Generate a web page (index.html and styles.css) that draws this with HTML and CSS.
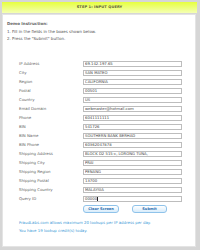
FILE: index.html
```html
<!DOCTYPE html>
<html>
<head>
<meta charset="utf-8">
<link rel="stylesheet" href="styles.css">
</head>
<body>
<div class="frame">
  <div class="header">STEP 1: INPUT QUERY</div>
  <div class="panel">
    <div class="instr">
      <div class="instr-title">Demo Instruction:</div>
      <div>1. Fill in the fields in the boxes shown below.</div>
      <div>2. Press the "Submit" button.</div>
    </div>
    <form class="form">
      <div class="row"><label>IP Address</label><input value="69.142.197.65"></div>
      <div class="row"><label>City</label><input value="SAN MATEO"></div>
      <div class="row"><label>Region</label><input value="CALIFORNIA"></div>
      <div class="row"><label>Postal</label><input value="00501"></div>
      <div class="row"><label>Country</label><input value="US"></div>
      <div class="row"><label>Email Domain</label><input value="webmaster@hotmail.com"></div>
      <div class="row"><label>Phone</label><input value="6041111111"></div>
      <div class="row"><label>BIN</label><input value="541726"></div>
      <div class="row"><label>BIN Name</label><input value="SOUTHERN BANK BERHAD"></div>
      <div class="row"><label>BIN Phone</label><input value="60362047878"></div>
      <div class="row"><label>Shipping Address</label><input value="BLOCK D2 515-c, LORONG TUNA,"></div>
      <div class="row"><label>Shipping City</label><input value="PRAI"></div>
      <div class="row"><label>Shipping Region</label><input value="PENANG"></div>
      <div class="row"><label>Shipping Postal</label><input value="13700"></div>
      <div class="row"><label>Shipping Country</label><input value="MALAYSIA"></div>
      <div class="row"><label>Query ID</label><div class="fake-input">00000<span class="caret"></span></div></div>
      <div class="buttons">
        <button type="button" class="btn btn-clear">Clear Screen</button>
        <button type="button" class="btn btn-submit">Submit</button>
      </div>
    </form>
    <div class="note">
      <div>FraudLabs.com allows maximum 20 lookups per IP address per day.</div>
      <div>You have 19 lookup credit(s) today.</div>
    </div>
  </div>
</div>
</body>
</html>
```
FILE: styles.css
```css
* { box-sizing: border-box; }
html, body { margin: 0; padding: 0; }
body {
  width: 200px;
  height: 250px;
  overflow: hidden;
  font-family: "DejaVu Sans", Verdana, sans-serif;
  color: #555;
}
.frame {
  width: 200px;
  height: 250px;
  background: #d6d6d6;
  padding: 2px 3px 3px 2px;
  display: flex;
  flex-direction: column;
}
.header {
  height: 11px;
  background: linear-gradient(#e6ff3e, #f4ffb4);
  font-size: 3.6px;
  font-weight: bold;
  color: #5a5a3a;
  text-align: center;
  line-height: 11px;
  letter-spacing: 0.1px;
}
.panel {
  flex: 1;
  margin-top: 1px;
  margin-right: 1px;
  background: #fff;
  border: 1px solid #e4e4e4;
  padding: 5px 0 0 4px;
  font-size: 4px;
}
.instr {
  line-height: 7.5px;
  color: #555;
}
.instr-title { font-weight: bold; color: #666; }
.form {
  margin: 16.5px 0 0 12px;
}
.row {
  display: flex;
  align-items: center;
  height: 9px;
}
.row label {
  width: 64px;
  font-size: 3.9px;
  color: #666;
}
.row input, .fake-input {
  width: 99px;
  height: 6px;
  border: 1px solid #bdbdbd;
  padding: 0 1px;
  font-family: "DejaVu Sans", Verdana, sans-serif;
  font-size: 3.8px;
  color: #444;
  background: #fff;
  outline: none;
  margin: 0;
}
.fake-input {
  display: flex;
  align-items: center;
  line-height: 4px;
}
.caret {
  display: inline-block;
  width: 0.6px;
  height: 4px;
  background: #222;
  margin-left: 0.3px;
}
.buttons {
  display: flex;
  gap: 13px;
  margin: 2px 0 0 64px;
}
.btn {
  height: 8px;
  padding: 0;
  border: 1px solid #8fc3ea;
  border-radius: 3px;
  background: linear-gradient(#ffffff, #d8ecfb);
  color: #2f6fae;
  font-family: "DejaVu Sans", Verdana, sans-serif;
  font-size: 3.6px;
  font-weight: bold;
  line-height: 6px;
}
.btn-clear { width: 36px; }
.btn-submit { width: 35px; }
.note {
  margin: 5.5px 0 0 12px;
  color: #3e9ad6;
  font-size: 3.9px;
  line-height: 8px;
}
```
